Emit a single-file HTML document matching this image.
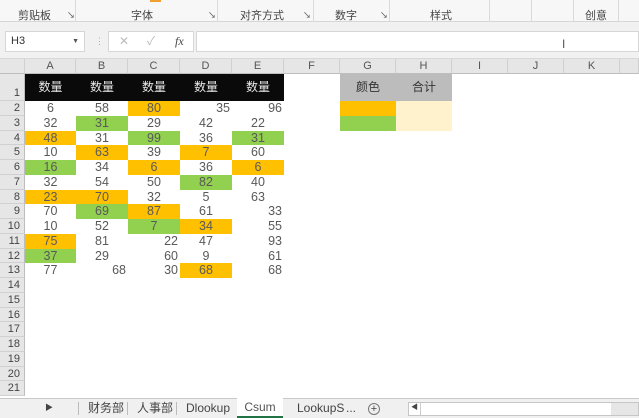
<!DOCTYPE html>
<html><head><meta charset="utf-8"><style>
*{margin:0;padding:0;box-sizing:border-box}
body{width:639px;height:418px;overflow:hidden;background:#fff;position:relative;font-family:"Liberation Sans","Noto Sans CJK SC",sans-serif;color:#595959}
.a{position:absolute}
.rib{left:0;top:0;width:639px;height:22px;background:#f7f7f7;border-bottom:1px solid #d6d6d6}
.gl{top:7px;font-size:11px;color:#444}
.sep{top:0;width:1px;height:22px;background:#dadada}
.fb{left:0;top:22px;width:639px;height:37px;background:#f1f1f1;border-bottom:1px solid #d8d8d8}
.box{background:#fff;border:1px solid #d6d6d6}
.ch{top:59px;height:15px;background:#e6e6e6;border-bottom:1px solid #bdbdbd;font-size:11px;text-align:center;line-height:15px;color:#555;border-right:1px solid #d0d0d0}
.rh{left:0;width:25px;background:#e6e6e6;border-right:1px solid #bdbdbd;border-bottom:1px solid #d0d0d0;font-size:11px;color:#444;text-align:right;padding-right:4px}
.c{height:14.75px;font-size:12.5px;line-height:15px;text-align:center}
.r{text-align:right;padding-right:2px}
.o{background:#FFC000}.g{background:#92D050}
.hd{top:74px;height:27px;line-height:27px;font-size:12px;text-align:center}
.tabs{left:0;top:398px;width:639px;height:20px;background:#f0f0f0;border-top:1px solid #c8c8c8;font-size:12px;color:#444}
.tab{top:0;height:19px;line-height:18px}
</style></head><body>
<div class="a rib"></div>
<div class="a" style="left:150px;top:0;width:11px;height:2px;background:#f0a030"></div>
<div class="a gl" style="left:18px">剪贴板</div><div class="a gl" style="left:67px;font-size:8px;top:10px">↘</div>
<div class="a sep" style="left:75px"></div>
<div class="a gl" style="left:131px">字体</div><div class="a gl" style="left:208px;font-size:8px;top:10px">↘</div>
<div class="a sep" style="left:217px"></div>
<div class="a gl" style="left:240px">对齐方式</div><div class="a gl" style="left:303px;font-size:8px;top:10px">↘</div>
<div class="a sep" style="left:313px"></div>
<div class="a gl" style="left:335px">数字</div><div class="a gl" style="left:380px;font-size:8px;top:10px">↘</div>
<div class="a sep" style="left:389px"></div>
<div class="a gl" style="left:430px">样式</div>
<div class="a sep" style="left:489px"></div><div class="a sep" style="left:531px"></div>
<div class="a gl" style="left:585px">创意</div>
<div class="a sep" style="left:573px"></div><div class="a sep" style="left:618px"></div>
<div class="a fb"></div>
<div class="a box" style="left:5px;top:31px;width:80px;height:21px;font-size:11px;line-height:19px;padding-left:5px;color:#333">H3<span style="position:absolute;right:5px;font-size:7px;color:#555">▼</span></div>
<div class="a" style="left:95px;top:36px;font-size:9px;color:#aaa">⋮</div>
<div class="a box" style="left:108px;top:31px;width:86px;height:21px;font-size:12px;line-height:19px;color:#bbb"><span style="position:absolute;left:10px">✕</span><span style="position:absolute;left:38px">✓</span><span style="position:absolute;left:66px;color:#444;font-style:italic;font-family:'Liberation Serif',serif">fx</span></div>
<div class="a box" style="left:196px;top:31px;width:443px;height:21px"></div>
<div class="a" style="left:562px;top:37px;font-size:12px;color:#555">I</div>
<div class="a ch" style="left:0;width:25px"></div>
<div id="cols"></div>
<div class="a" style="left:25px;top:74px;width:259px;height:27px;background:#0a0a0a"></div>
<div class="a" style="left:340px;top:74px;width:112px;height:27px;background:#bcbcbc"></div>
<div class="a hd" style="left:340px;width:56px;color:#333">颜色</div>
<div class="a hd" style="left:396px;width:56px;color:#333">合计</div>
<div class="a o" style="left:340px;top:101px;width:56px;height:15px"></div>
<div class="a g" style="left:340px;top:116px;width:56px;height:15px"></div>
<div class="a" style="left:396px;top:101px;width:56px;height:30px;background:#FFF2CC"></div>
<div id="grid"></div>
<div class="a tabs">
<div class="a tab" style="left:45px;font-size:8px">▶</div>
<div class="a" style="left:78px;top:3px;width:1px;height:13px;background:#bbb"></div>
<div class="a tab" style="left:88px">财务部</div>
<div class="a" style="left:127px;top:3px;width:1px;height:13px;background:#bbb"></div>
<div class="a tab" style="left:137px">人事部</div>
<div class="a" style="left:176px;top:3px;width:1px;height:13px;background:#bbb"></div>
<div class="a tab" style="left:186px">Dlookup</div>
<div class="a" style="left:237px;top:-1px;width:46px;height:20px;background:#fff;border-bottom:2px solid #217346;text-align:center;line-height:18px;color:#555">Csum</div>
<div class="a tab" style="left:297px">LookupS</div>
<div class="a tab" style="left:346px">...</div>
<div class="a" style="left:368px;top:4px;width:12px;height:12px;border:1px solid #777;border-radius:50%;text-align:center;line-height:10px;font-size:11px">+</div>
<div class="a" style="left:408px;top:3px;width:231px;height:14px;background:#fff;border:1px solid #c6c6c6"></div>
<div class="a" style="left:420px;top:4px;width:1px;height:12px;background:#ccc"></div>
<div class="a" style="left:411px;top:3px;font-size:7px">◀</div>
<div class="a" style="left:611px;top:4px;width:27px;height:12px;background:#e6e6e6"></div>
</div>
<script>
var cols=[["A",25,51],["B",76,52],["C",128,52],["D",180,52],["E",232,52],["F",284,56],["G",340,56],["H",396,56],["I",452,56],["J",508,56],["K",564,56],["",620,19]];
var h="";cols.forEach(function(c){h+='<div class="a ch" style="left:'+c[1]+'px;width:'+c[2]+'px">'+c[0]+'</div>';});
document.getElementById("cols").innerHTML=h;
var d=[
["6","58","80o","35r","96r"],["32","31g","29","42","22"],["48o","31","99g","36","31g"],["10","63o","39","7o","60"],
["16g","34","6o","36","6o"],["32","54","50","82g","40"],["23o","70o","32","5","63"],["70","69g","87o","61","33r"],
["10","52","7g","34o","55r"],["75o","81","22r","47","93r"],["37g","29","60r","9","61r"],["77","68r","30r","68o","68r"]];
var g="";
for(var i=0;i<5;i++){g+='<div class="a hd" style="left:'+cols[i][1]+'px;width:'+cols[i][2]+'px;color:#e8e8e8">数量</div>';}
g+='<div class="a rh" style="top:74px;height:27px;line-height:38px">1</div>';
for(var r=0;r<20;r++){var y=101+r*14.75;
g+='<div class="a rh" style="top:'+y+'px;height:14.75px;line-height:15px">'+(r+2)+'</div>';
if(r<12){for(var i=0;i<5;i++){var v=d[r][i],cl="c";var n=v.replace(/[ogr]/g,"");
if(v.indexOf("o")>0)cl+=" o";if(v.indexOf("g")>0)cl+=" g";if(v.indexOf("r")>0)cl+=" r";
g+='<div class="a '+cl+'" style="left:'+cols[i][1]+'px;top:'+y+'px;width:'+cols[i][2]+'px">'+n+'</div>';}}}
document.getElementById("grid").innerHTML=g;
</script>
</body></html>
